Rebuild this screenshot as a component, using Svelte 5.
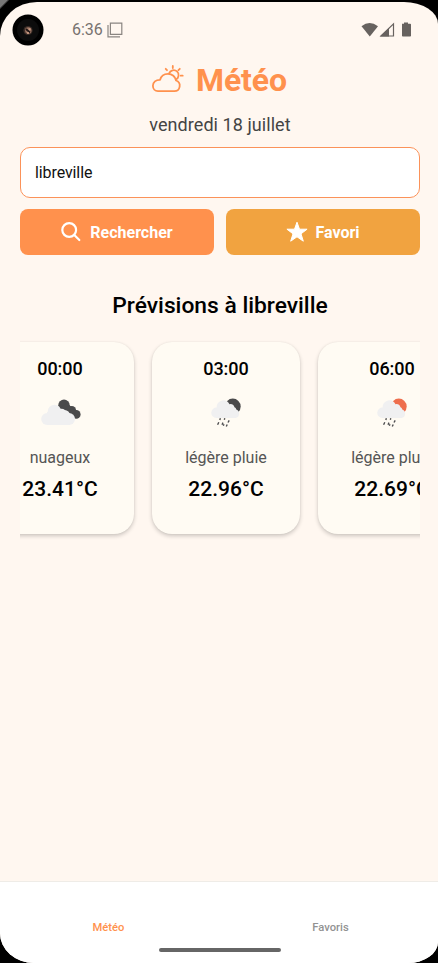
<script>
  const forecasts = [
    { time: '00:00', kind: 'clouds', label: 'nuageux', temp: '23.41°C' },
    { time: '03:00', kind: 'rain', disc: '#4a4a4b', label: 'légère pluie', temp: '22.96°C' },
    { time: '06:00', kind: 'rain', disc: '#ee6e4d', label: 'légère pluie', temp: '22.69°C' }
  ];
  let city = $state('libreville');
</script>

<div class="device">
  <div class="screen">
    <header class="status">
      <svg class="camera" width="32" height="32" viewBox="0 0 32 32">
        <circle cx="16" cy="16" r="15.5" fill="#000" />
        <circle cx="16" cy="16" r="11" fill="#0c0c0c" />
        <circle cx="16" cy="16.500" r="4.600" fill="#3a2c27" />
        <circle cx="16.300" cy="16.500" r="3.200" fill="#9a7361" />
        <path d="m14 15 4 3.500" stroke="#201615" stroke-width="1.800" />
        <circle cx="17.600" cy="15.300" r="1.100" fill="#c99a82" />
        <circle cx="16" cy="19" r="1" fill="#d5a288" />
      </svg>
      <span class="clock">6:36</span>
      <svg class="windows" width="16" height="16" viewBox="0 0 16 16" fill="none" stroke="#8a8581" stroke-width="1.200">
        <path d="M3.400 1.200h11.400v11.200H3.400z" />
        <path d="M1 3v11.800h12" />
      </svg>
      <svg class="signals" width="52" height="17" viewBox="0 0 52 17">
        <path d="M.5 4.300Q8.500-2.300 17 4.300L8.800 14.500z" fill="#67625f" />
        <path d="M20 14 32.500 1.800V14z" fill="none" stroke="#67625f" stroke-width="1.200" />
        <path d="M19 14.500 28 6V14.500z" fill="#67625f" />
        <path d="M41 1.700h2V.4h4v1.300h2.200q.8 0 .8.800V13.700q0 .8-.8.800H41.800q-.8 0-.8-.8z" fill="#67625f" />
      </svg>
    </header>

    <main>
      <h1>
        <svg width="34" height="32" viewBox="0 0 34 32" fill="none" stroke="#ff914d" stroke-width="1.800" stroke-linecap="round" stroke-linejoin="round">
          <path d="M7 27.200h16.300a5.500 5.500 0 0 0 1.700-10.700c-.5-3.900-3.900-6.700-8-6.700-4 0-7 2.500-7.900 6C4.900 15.600 1.900 18.300 1.900 21.800c0 3.300 2.200 5.400 5.100 5.400z" />
          <path d="M18.100 9.400a4.900 4.900 0 1 1 6.700 6.100" />
          <path d="M21.800 2v2M14.700 4.800l1.300 1.400M28.800 4.800l-1.400 1.400M29.700 11.700h2" />
        </svg>
        <span>Météo</span>
      </h1>
      <p class="date">vendredi 18 juillet</p>

      <input type="text" bind:value={city} aria-label="Ville" />

      <div class="actions">
        <button class="search">
          <svg width="20" height="20" viewBox="0 0 20 20" fill="none" stroke="#fff" stroke-width="2.200" stroke-linecap="round">
            <circle cx="8.200" cy="8" r="6.900" />
            <path d="m13.300 13 5 5" />
          </svg>
          <span>Rechercher</span>
        </button>
        <button class="favorite">
          <svg width="22" height="22" viewBox="0 0 22 22" fill="#fff" stroke="#fff" stroke-linejoin="round">
            <path d="m11 1.200 2.500 7h7.600l-6.100 4.600 2.300 7.400L11 15.800l-6.300 4.400L7 12.800.9 8.200h7.600z" />
          </svg>
          <span>Favori</span>
        </button>
      </div>

      <h2>Prévisions à libreville</h2>

      <div class="scroller">
        <div class="track">
          {#each forecasts as f}
            <article>
              <time>{f.time}</time>
              <svg class={f.kind} width="50" height="50" viewBox="0 0 50 50">
                {#if f.kind === 'clouds'}
                  <g fill="#4a4a4b">
                    <circle cx="29" cy="18.300" r="5.700" />
                    <circle cx="36.800" cy="23.300" r="4.300" />
                    <circle cx="41.300" cy="27.400" r="4.300" />
                    <path d="M26 20l6-4 9 8-3 7z" />
                  </g>
                  <g fill="#f0f0f1">
                    <circle cx="12.200" cy="32" r="6" />
                    <circle cx="19.500" cy="24.500" r="6.800" />
                    <circle cx="26.500" cy="26.500" r="4.800" />
                    <circle cx="29.500" cy="28.500" r="5.500" />
                    <circle cx="34" cy="32" r="6" />
                    <path d="M12 25h20l3 13H12z" />
                  </g>
                {:else}
                  <circle cx="32.800" cy="19.500" r="7.900" fill={f.disc} />
                  <path d="M16.300 31a5.200 5.200 0 1 1 .3-10.400 6.800 6.800 0 0 1 5.400-7.200q5-1 7.500 3.800 3.700-.7 5 3 1.500.5 1.800 2.200a4.500 4.500 0 0 1-.8 8.600z" fill="#f0f0f1" />
                  <path d="m20.400 31.300-.6 1.600M24.800 31.200l-.5 1.600M29.200 33.300l-1.200 2.200M18.800 35.300l-1.200 2.400M23 35.600l-1 2.200M27.200 37.500l-.9 2M24 37.300l-.7 1.500" stroke="#4d4d4f" stroke-width="1.400" />
                {/if}
              </svg>
              <span class="label">{f.label}</span>
              <strong>{f.temp}</strong>
            </article>
          {/each}
        </div>
      </div>
    </main>

    <nav>
      <div class="tabs">
        <span class="active">Météo</span>
        <span>Favoris</span>
      </div>
      <div class="handle"></div>
    </nav>
  </div>
</div>

<style>
  .device {
    box-sizing: border-box;
    width: 438px;
    height: 963px;
    padding-top: 2px;
    background: linear-gradient(135deg, #777 0, #777 5px, #000 7px);
    overflow: hidden;
    font-family: Roboto, 'Liberation Sans', sans-serif;
  }
  .screen {
    display: flex;
    flex-direction: column;
    height: 961px;
    background: #fff7f0;
    border-radius: 37px 34px 30px 34px / 34px 22px 21px 30px;
    overflow: hidden;
  }
  .status {
    display: flex;
    align-items: center;
    height: 56px;
    padding: 0 25px 0 12px;
    flex: none;
  }
  .clock {
    margin: -2px 0 0 28px;
    font-size: 16px;
    color: #77726f;
  }
  .windows {
    margin-left: 4px;
  }
  .signals {
    margin-left: auto;
  }
  main {
    display: flex;
    flex-direction: column;
    flex: 1;
    padding: 0 18px 0 20px;
    min-height: 0;
  }
  h1 {
    display: flex;
    justify-content: center;
    align-items: center;
    gap: 11px;
    height: 42px;
    margin: 1px 2px 0 0;
    font-size: 32px;
    font-weight: 700;
    letter-spacing: -0.1px;
    color: #ff914d;
  }
  .date {
    margin: 13px 0 0;
    height: 22px;
    line-height: 22px;
    font-size: 18px;
    letter-spacing: 0.06px;
    text-align: center;
    color: #444;
  }
  input {
    box-sizing: border-box;
    width: 400px;
    height: 51px;
    margin: 11px 0 0;
    padding: 0 14px;
    border: 1px solid #fb9259;
    border-radius: 10px;
    background: #fff;
    font: 16px Roboto, 'Liberation Sans', sans-serif;
    letter-spacing: -0.1px;
    color: #111;
    outline: none;
  }
  .actions {
    display: flex;
    gap: 12px;
    height: 46px;
    margin-top: 11px;
  }
  button {
    display: flex;
    flex: 1;
    align-items: center;
    justify-content: center;
    gap: 8px;
    padding: 0;
    border: 0;
    border-radius: 8px;
    color: #fff;
    font: 700 16px Roboto, 'Liberation Sans', sans-serif;
  }
  .search {
    gap: 9px;
    background: #ff914d;
  }
  .favorite {
    gap: 7px;
    background: #f1a340;
  }
  h2 {
    margin: 37px 0 0;
    height: 28px;
    line-height: 28px;
    font-size: 22.800px;
    font-weight: 500;
    text-align: center;
    color: #000;
  }
  .scroller {
    width: 400px;
    height: 225px;
    margin-top: 20px;
    overflow: hidden;
  }
  .track {
    display: flex;
    gap: 18px;
    width: max-content;
    margin-left: -34px;
    padding-top: 2px;
  }
  article {
    box-sizing: border-box;
    display: flex;
    flex-direction: column;
    align-items: center;
    width: 148px;
    height: 192px;
    padding-top: 15px;
    border-radius: 20px;
    background: #fffbf3;
    box-shadow: 0 2px 4px rgba(0, 0, 0, 0.2), 0 0 2px rgba(0, 0, 0, 0.06);
    white-space: nowrap;
  }
  time {
    height: 24px;
    line-height: 24px;
    font-size: 18px;
    font-weight: 500;
    color: #000;
  }
  article svg {
    margin-top: 6px;
  }
  article .rain {
    margin-right: 2px;
  }
  .label {
    height: 22px;
    margin-top: 10px;
    line-height: 22px;
    font-size: 16px;
    color: #555;
  }
  strong {
    height: 26px;
    margin-top: 7px;
    line-height: 26px;
    font-size: 21px;
    font-weight: 500;
    color: #000;
  }
  nav {
    display: flex;
    flex-direction: column;
    align-items: center;
    flex: none;
    height: 81px;
    border-top: 1px solid #efece7;
    background: #fff;
  }
  .tabs {
    display: flex;
    width: 444px;
    height: 15px;
    margin: 38px -4px 0 -3px;
    line-height: 15px;
    font-size: 11.200px;
    font-weight: 500;
    text-align: center;
    color: #929292;
  }
  .tabs span {
    flex: 1;
  }
  .tabs .active {
    color: #ff914d;
  }
  .handle {
    width: 122px;
    height: 4px;
    margin: 13px 0 0 2px;
    border-radius: 2px;
    background: #666;
  }
</style>
